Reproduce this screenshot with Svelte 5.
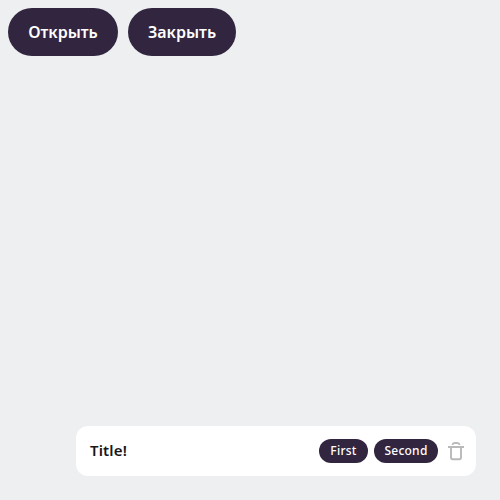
<script>
  const actions = ['Открыть', 'Закрыть'];
  const chips = ['First', 'Second'];
</script>

<main>
  <div class="actions">
    {#each actions as label, i}
      <button class="action a{i}"><span>{label}</span></button>
    {/each}
  </div>
  <section class="bar">
    <h1><span>Title!</span></h1>
    {#each chips as label, i}
      <button class="chip c{i}"><span>{label}</span></button>
    {/each}
    <button class="trash" aria-label="Delete">
      <svg width="24" height="24" viewBox="0 0 24 24" fill="none" stroke="#b9b9b9" stroke-width="1.9">
        <path d="M4 8H20M8.3 5.9C8.7 4.8 9.3 4 10.5 4h3C14.7 4 15.3 4.8 15.7 5.9M7 8V18.6a1.6 1.6 0 0 0 1.6 1.6h6.8a1.6 1.6 0 0 0 1.6-1.6V8" />
      </svg>
    </button>
  </section>
</main>

<style>
  :global(body) { margin: 0; background: #edeff1; }
  main {
    box-sizing: border-box;
    height: 100vh;
    padding: 8px 24px 24px 8px;
    display: flex;
    flex-direction: column;
    justify-content: space-between;
    font-family: "Noto Sans", "Open Sans", sans-serif;
  }
  button { border: 0; padding: 0; font-family: inherit; }
  span { display: inline-block; white-space: nowrap; }
  .actions { display: flex; gap: 10px; }
  .action { height: 48px; border-radius: 24px; background: #32253f; color: #fff; font-size: 16px; font-weight: 600; }
  .a0 { width: 110px; }
  .a1 { width: 108px; }
  .bar {
    box-sizing: border-box;
    align-self: flex-end;
    width: 400px;
    height: 50px;
    padding: 0 8px 0 14px;
    border-radius: 12px;
    background: #fff;
    display: flex;
    align-items: center;
  }
  h1 { flex: 1; margin: 0; padding-bottom: 2px; font-size: 15px; line-height: 20px; font-weight: 600; letter-spacing: 0.15px; color: #171717; }
  .chip { height: 24px; margin-right: 6px; padding-bottom: 2px; border-radius: 12px; background: #32253f; color: #fff; font-size: 12px; font-weight: 500; letter-spacing: 0.25px; }
  .c0 { width: 49px; }
  .c1 { width: 64px; }
  .trash { display: flex; width: 24px; height: 24px; background: none; }
</style>
